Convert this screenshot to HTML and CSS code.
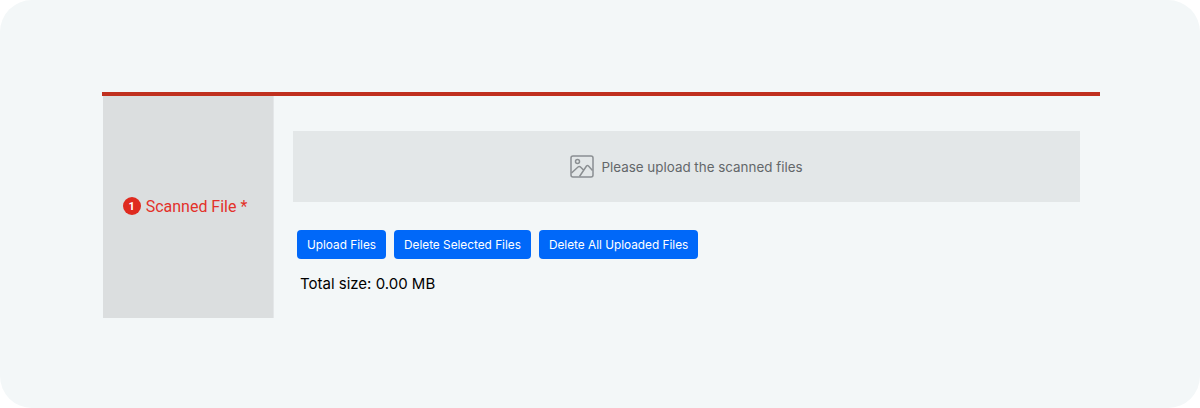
FILE: index.html
```html
<!DOCTYPE html>
<html lang="en">
<head>
    <meta charset="UTF-8">
    <title>Scanned File</title>
    <link rel="stylesheet" href="styles.css">
</head>
<body>
    <div class="panel">
        <div class="form-row">
            <div class="label-cell">
                <span class="step-badge">1</span>
                <span class="label-text">Scanned File *</span>
            </div>
            <div class="content-cell">
                <div class="upload-box">
                    <svg class="upload-icon" width="24" height="23" viewBox="0 0 24 23" fill="none" stroke="#8b8f92" stroke-width="1.5">
                        <rect x="1" y="1" width="22" height="21" rx="2"/>
                        <circle cx="7.5" cy="6.5" r="2"/>
                        <path d="M1.5 18 L8 12 Q9.5 11 11 12.5 L14 15.5 M9.5 21.5 L16.5 11 Q17.5 10 18.5 11 L22.5 15.5"/>
                    </svg>
                    <span>Please upload the scanned files</span>
                </div>
                <div class="btn-row">
                    <button class="btn">Upload Files</button>
                    <button class="btn">Delete Selected Files</button>
                    <button class="btn">Delete All Uploaded Files</button>
                </div>
                <div class="total-size">Total size: 0.00 MB</div>
            </div>
        </div>
    </div>
</body>
</html>
```

FILE: styles.css
```css
* { margin: 0; padding: 0; box-sizing: border-box; }

body {
    width: 1200px;
    height: 408px;
    background: #ffffff;
    overflow: hidden;
    font-family: Inter, sans-serif;
}

.panel {
    height: 408px;
    background: #f3f7f8;
    border-radius: 32px;
    padding: 92px 100px 0 102px;
}

.form-row {
    display: flex;
    height: 226px;
    border-top: 4px solid #c0301f;
}

.label-cell {
    width: 171px;
    margin-left: 1px;
    background: #dbdedf;
    border-right: 1px solid #e4e7e9;
    display: flex;
    align-items: center;
    justify-content: center;
    gap: 5px;
    padding: 0 6px 2px 0;
    font-family: Roboto, sans-serif;
    font-size: 16px;
    color: #e3312a;
}

.step-badge {
    width: 18px;
    height: 18px;
    border-radius: 50%;
    background: #df2a1f;
    color: #ffffff;
    font-size: 11px;
    font-weight: 700;
    display: flex;
    align-items: center;
    justify-content: center;
    padding-top: 1px;
}

.content-cell {
    flex: 1;
    padding: 35px 20px 0 19px;
}

.upload-box {
    height: 71px;
    background: #e3e7e8;
    display: flex;
    align-items: center;
    justify-content: center;
    gap: 7px;
    font-size: 13.4px;
    color: #63676a;
}

.btn-row {
    display: flex;
    gap: 8px;
    margin: 28px 0 0 4px;
}

.btn {
    height: 29px;
    padding: 0 10px;
    background: #0068f9;
    color: #ffffff;
    border: none;
    border-radius: 4px;
    font-family: Inter, sans-serif;
    font-size: 11.8px;
    font-weight: 400;
}

.total-size {
    margin: 16px 0 0 7px;
    font-size: 15px;
    line-height: 18px;
    color: #000000;
}
```
